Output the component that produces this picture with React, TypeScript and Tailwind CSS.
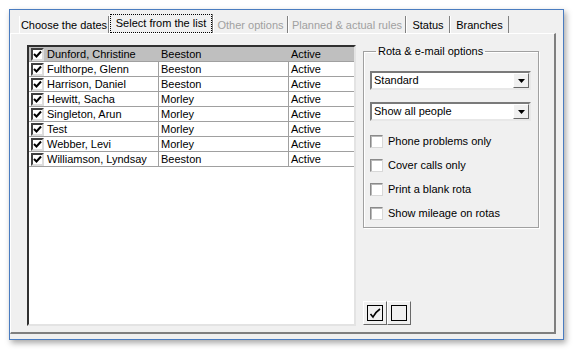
import { type FC } from "react"

const people: [string, string][] = [
  ["Dunford, Christine", "Beeston"],
  ["Fulthorpe, Glenn", "Beeston"],
  ["Harrison, Daniel", "Beeston"],
  ["Hewitt, Sacha", "Morley"],
  ["Singleton, Arun", "Morley"],
  ["Test", "Morley"],
  ["Webber, Levi", "Morley"],
  ["Williamson, Lyndsay", "Beeston"],
]

const tabs = [
  { title: "Choose the dates", w: "w-[90px]" },
  { title: "Select from the list", w: "w-[104px]", active: true },
  { title: "Other options", w: "w-[75px]", disabled: true },
  { title: "Planned & actual rules", w: "w-[118px]", disabled: true },
  { title: "Status", w: "w-[44px]" },
  { title: "Branches", w: "w-[59px]" },
]

const options = ["Phone problems only", "Cover calls only", "Print a blank rota", "Show mileage on rotas"]

const Tick: FC = () => (
  <svg width="9" height="9" viewBox="0 0 9 9">
    <path d="M1 4 L3.5 6.5 L8 1.5" fill="none" stroke="black" strokeWidth="2" />
  </svg>
)

const ListCheck: FC = () => (
  <span className="w-[13px] h-[13px] shrink-0 flex items-center justify-center bg-white border-2 border-t-[#404040] border-l-[#404040] border-r-[#dcdcdc] border-b-[#dcdcdc]">
    <Tick />
  </span>
)

const Combo: FC<{ value: string }> = ({ value }) => (
  <div className="h-[19px] w-[161px] flex items-center bg-white border-2 border-t-[#7a7a7a] border-l-[#7a7a7a] border-r-[#e8e8e8] border-b-[#e8e8e8]">
    <span className="flex-1 pl-[2px]">{value}</span>
    <span className="w-[16px] h-[15px] flex items-center justify-center bg-[#f0f0f0] border border-t-white border-l-white border-r-[#696969] border-b-[#696969]">
      <svg width="7" height="4" viewBox="0 0 7 4">
        <path d="M0 0 H7 L3.5 4 Z" fill="black" />
      </svg>
    </span>
  </div>
)

const App: FC = () => {
  return (
    <div className="w-[574px] h-[350px] bg-white pt-[9px] pl-[9px] font-['Liberation_Sans',Arial,sans-serif] text-[11px] leading-[13px] text-black">
      <div className="w-[555px] h-[331px] bg-[#f0f0f0] border border-[#4a7cc0] shadow-[2px_3px_6px_rgba(0,0,0,0.35)] flex flex-col">
        {/* tabs */}
        <div className="h-[23px] pl-[9px] flex items-end shrink-0">
          {tabs.map((t) => (
            <div
              key={t.title}
              className={`${t.w} ${t.active ? "h-[19px]" : "h-[17px]"} flex border-l border-white border-r border-r-[#808080] ${t.disabled ? "text-[#a0a0a0]" : ""}`}
            >
              {t.active ? (
                <span className="flex-1 flex items-center justify-center border border-dotted border-black">{t.title}</span>
              ) : (
                <span className="flex-1 flex items-center justify-center pt-[1px]">{t.title}</span>
              )}
            </div>
          ))}
        </div>

        {/* panel */}
        <div className="flex-1 mr-[7px] mb-[5px] flex border-t border-l border-white border-r-2 border-b-2 border-r-[#7f7f7f] border-b-[#7f7f7f] pt-[11px] pb-[6px] pl-[16px]">
          {/* people list */}
          <div className="w-[329px] bg-white border-2 border-t-[#303030] border-l-[#303030] border-r-[#e3e3e3] border-b-[#e3e3e3]">
            {people.map(([name, branch], i) => {
              const sel = i === 0
              return (
                <div key={name} className={`h-[15px] flex border-b border-[#a0a0a0] ${sel ? "bg-[#bfbfbf]" : ""}`}>
                  <div className={`w-[130px] flex items-center gap-[3px] pl-[2px] border-r ${sel ? "border-transparent" : "border-[#a0a0a0]"}`}>
                    <ListCheck />
                    <span>{name}</span>
                  </div>
                  <div className={`w-[130px] flex items-center pl-[2px] border-r ${sel ? "border-transparent" : "border-[#a0a0a0]"}`}>
                    {branch}
                  </div>
                  <div className="flex-1 flex items-center pl-[2px]">Active</div>
                </div>
              )
            })}
          </div>

          {/* options column */}
          <div className="w-[176px] ml-[7px] flex flex-col justify-between">
            <fieldset className="h-[183px] border border-[#a0a0a0] shadow-[1px_1px_0_white,inset_1px_1px_0_white] px-[6px]">
              <legend className="ml-[6px] px-[2px]">Rota &amp; e-mail options</legend>
              <div className="mt-[13px] flex flex-col gap-[12px]">
                <Combo value="Standard" />
                <Combo value="Show all people" />
              </div>
              <div className="mt-[14px] flex flex-col gap-[11px]">
                {options.map((o) => (
                  <label key={o} className="flex items-center gap-[5px] h-[13px]">
                    <span className="w-[13px] h-[13px] bg-white border border-t-[#8a8a8a] border-l-[#8a8a8a] border-r-[#d8d8d8] border-b-[#d8d8d8] shadow-[inset_1px_1px_0_#b8b8b8]" />
                    <span>{o}</span>
                  </label>
                ))}
              </div>
            </fieldset>

            <div className="flex mb-[1px]">
              <button className="w-[24px] h-[24px] flex items-center justify-center border border-t-white border-l-white border-r-[#696969] border-b-[#696969]">
                <span className="w-[16px] h-[16px] border border-black flex items-center justify-center">
                  <svg width="12" height="11" viewBox="0 0 12 11">
                    <path d="M1.5 6 L4 9 C5.5 6 8 3 11 1" fill="none" stroke="black" strokeWidth="1.6" />
                  </svg>
                </span>
              </button>
              <button className="w-[24px] h-[24px] flex items-center justify-center border border-t-white border-l-white border-r-[#696969] border-b-[#696969]">
                <span className="w-[16px] h-[16px] border border-black" />
              </button>
            </div>
          </div>
        </div>
      </div>
    </div>
  )
}

export default App
